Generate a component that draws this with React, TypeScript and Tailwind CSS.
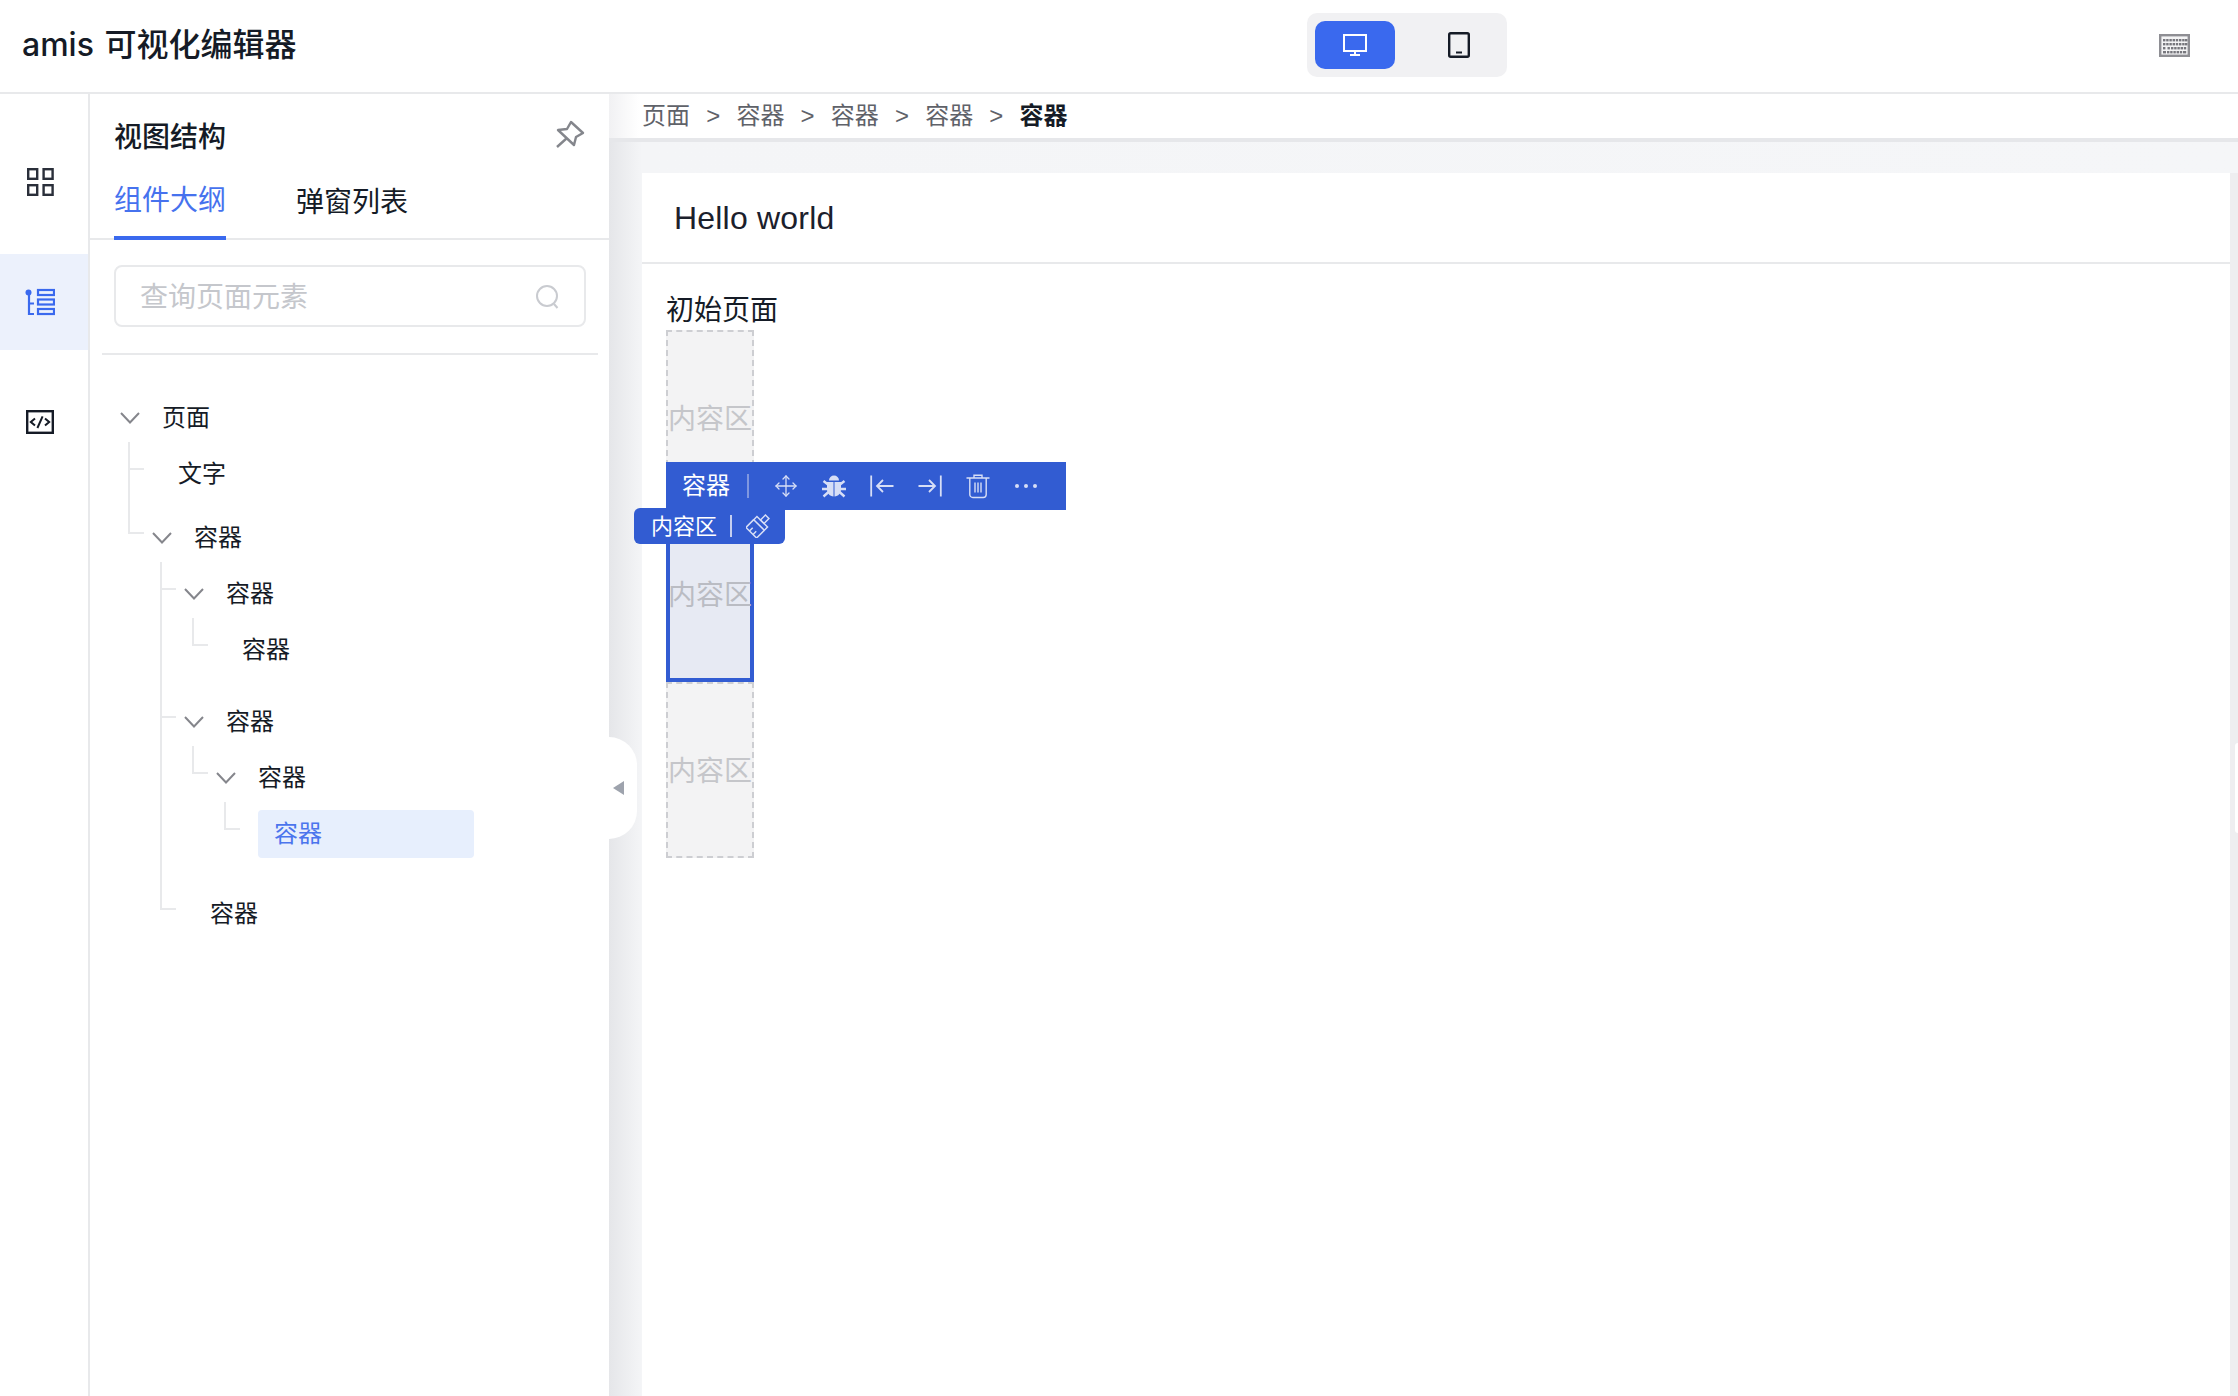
import React from "react";
import { Move } from "lucide-react";

type Node = { label: string; children?: Node[]; selected?: boolean };

const tree: Node = {
  label: "页面",
  children: [
    { label: "文字" },
    {
      label: "容器",
      children: [
        { label: "容器", children: [{ label: "容器" }] },
        { label: "容器", children: [{ label: "容器", children: [{ label: "容器", selected: true }] }] },
        { label: "容器" },
      ],
    },
  ],
};

function Chevron() {
  return (
    <svg width="20" height="12" viewBox="0 0 20 12" fill="none" stroke="#85868c" strokeWidth="2">
      <polyline points="1,1 10,10.5 19,1" />
    </svg>
  );
}

function TreeItem({ node, isChild, isLast }: { node: Node; isChild?: boolean; isLast?: boolean }) {
  return (
    <li className="relative py-2">
      {isChild && (
        <span className="absolute left-[-2px] top-0 h-[28px] w-[16px] border-b-2 border-l-2 border-[#e8e9eb]" />
      )}
      {isChild && !isLast && <span className="absolute bottom-0 left-[-2px] top-0 w-[2px] bg-[#e8e9eb]" />}
      {node.children ? (
        <div className="flex h-[48px] items-center text-[24px] text-[#151b26]">
          <span className="ml-[22px] flex w-[20px] items-center">
            <Chevron />
          </span>
          <span className="ml-[22px]">{node.label}</span>
        </div>
      ) : (
        <div
          className={
            node.selected
              ? "ml-[32px] flex h-[48px] w-[216px] items-center rounded-[4px] bg-[#e7effd] pl-[16px] text-[24px] text-[#4b75ed]"
              : "ml-[32px] flex h-[48px] items-center pl-[16px] text-[24px] text-[#151b26]"
          }
        >
          {node.label}
        </div>
      )}
      {node.children && (
        <ul className="pl-[32px]">
          {node.children.map((c, i) => (
            <TreeItem key={i} node={c} isChild isLast={i === node.children!.length - 1} />
          ))}
        </ul>
      )}
    </li>
  );
}

function GridIcon() {
  return (
    <svg width="27" height="28" viewBox="0 0 27 28" fill="none" stroke="#2a2f3a" strokeWidth="2.4">
      <rect x="1.2" y="1.2" width="9" height="9.6" />
      <rect x="16.6" y="1.2" width="9" height="9.6" />
      <rect x="1.2" y="17.2" width="9" height="9.6" />
      <rect x="16.6" y="17.2" width="9" height="9.6" />
    </svg>
  );
}

function TreeIcon() {
  return (
    <svg width="30" height="28" viewBox="0 0 30 28" fill="none" stroke="#3a69ee" strokeWidth="2.2">
      <circle cx="3.5" cy="4.5" r="3" fill="#3a69ee" stroke="none" />
      <path d="M4 5V26H9M4 15.500H9" />
      <rect x="13" y="2" width="16" height="5" />
      <rect x="13" y="11.500" width="16" height="5" />
      <rect x="13" y="21" width="16" height="5" />
    </svg>
  );
}

function CodeIcon() {
  return (
    <svg width="28" height="24" viewBox="0 0 28 24" fill="none" stroke="#151b26">
      <rect x="1.2" y="1.2" width="25.6" height="21.6" strokeWidth="2.4" />
      <path d="M9 8.4L4.8 12L9 15.6M19 8.4L23.2 12L19 15.6M16.6 6.4L11.4 18" strokeWidth="2" />
    </svg>
  );
}

function KeyboardIcon() {
  const rows: [number, number[]][] = [
    [5, [4, 7.2, 10.4, 13.6, 16.8, 20, 23.2, 26]],
    [9, [4, 7.2, 10.4, 13.6, 16.8, 20, 23.2, 26]],
    [13, [4, 8.5, 12, 15.2, 18.4, 21.6, 24.8]],
    [17, [8, 11.2, 14.4, 17.6, 20.8]],
  ];
  return (
    <svg width="31" height="23" viewBox="0 0 31 23">
      <rect x="1.2" y="1.2" width="28.6" height="20.6" fill="#f4f4f5" stroke="#8e8e93" strokeWidth="2.4" />
      {rows.map(([y, xs]) =>
        xs.map((x) => <rect key={`${y}-${x}`} x={x} y={y} width="2.4" height="2.4" fill="#77777d" />)
      )}
      <rect x="4" y="17" width="3" height="2.4" fill="#77777d" />
      <rect x="24" y="17" width="3.2" height="2.4" fill="#77777d" />
    </svg>
  );
}

const tone = "#d7def6";

function BugIcon() {
  return (
    <svg width="24" height="24" viewBox="0 0 24 24" fill={tone} stroke="none">
      <path d="M7 6.5a5 5 0 0 1 10 0z" />
      <path d="M5 8h6.500v14.500c-3.800-.4-6.500-3-6.500-7.500z" />
      <path d="M19 8h-6.500v14.500c3.800-.4 6.500-3 6.500-7.500z" />
      <path d="M1.500 7L6 10.500M0 15H6M1.500 22.500L6.500 18M22.500 7L18 10.500M24 15H18M22.500 22.500L17.500 18" stroke={tone} strokeWidth="2.400" fill="none" />
    </svg>
  );
}

function ArrowToLeft() {
  return (
    <svg width="24" height="22" viewBox="0 0 24 22" fill="none" stroke={tone} strokeWidth="1.800">
      <path d="M1.200 0.500V21.500" />
      <path d="M7 11H23.500M13 5L7 11L13 17" />
    </svg>
  );
}

function ArrowToRight() {
  return (
    <svg width="24" height="22" viewBox="0 0 24 22" fill="none" stroke={tone} strokeWidth="1.800">
      <path d="M22.800 0.500V21.500" />
      <path d="M17 11H0.500M11 5L17 11L11 17" />
    </svg>
  );
}

function TrashIcon() {
  return (
    <svg width="24" height="25" viewBox="0 0 24 25" fill="none" stroke={tone} strokeWidth="1.400">
      <path d="M0.500 4H23.500M8 4V1.200H16V4" />
      <path d="M3.800 4V20.500a3 3 0 0 0 3 3H17.200a3 3 0 0 0 3-3V4" />
      <path d="M9 8.500V18.500M12 8.500V18.500M15 8.500V18.500" />
    </svg>
  );
}

function BrushIcon() {
  return (
    <svg width="24" height="24" viewBox="0 0 24 24" fill="none" stroke={tone} strokeWidth="1.500">
      <g transform="rotate(45 12 12)">
        <rect x="9.500" y="-1" width="5" height="7" />
        <rect x="4.500" y="6" width="15" height="4.500" />
        <path d="M4.500 10.500V21.500H19.500V10.500M9.500 21.500V17M14.500 21.500V17" />
      </g>
    </svg>
  );
}

function PlaceholderBox({ active }: { active?: boolean }) {
  return (
    <div
      className={
        active
          ? "flex h-[176px] w-[88px] items-center justify-center whitespace-nowrap border-4 border-solid border-[#325cd2] bg-[#e7eaf3] pt-[2px] text-[28px] text-[#babcc3]"
          : "flex h-[176px] w-[88px] items-center justify-center whitespace-nowrap border-2 border-dashed border-[#cdced2] bg-[#f3f3f4] pt-[2px] text-[28px] text-[#c5c6ca]"
      }
    >
      内容区
    </div>
  );
}

export default function App() {
  return (
    <div className="flex h-[1396px] w-full flex-col overflow-hidden bg-white font-['Inter','Noto_Sans_CJK_SC',sans-serif] text-[#151b26]">
      <header className="flex h-[94px] shrink-0 items-center border-b-2 border-[#e8e9eb] pb-[2px]">
        <div className="w-[1307px] pl-[22px] text-[32px] font-medium">
          amis <span className="ml-[2px]">可视化编辑器</span>
        </div>
        <div className="flex h-[64px] w-[200px] items-center gap-6 rounded-[10px] bg-[#f1f1f3] px-2">
          <button className="flex h-[48px] w-[80px] items-center justify-center rounded-[10px] bg-[#3a69ee]">
            <svg width="24" height="22" viewBox="0 0 24 22" fill="none" stroke="#ffffff" strokeWidth="2">
              <rect x="1" y="1" width="22" height="16" />
              <path d="M12 17V20.500M7 21H17" />
            </svg>
          </button>
          <button className="flex h-[48px] w-[80px] items-center justify-center">
            <svg width="22" height="26" viewBox="0 0 22 26" fill="none" stroke="#151b26" strokeWidth="2.400">
              <rect x="1.200" y="1.200" width="19.600" height="23.600" rx="1.500" />
              <path d="M8 20.500H14" strokeWidth="2" />
            </svg>
          </button>
        </div>
        <div className="ml-auto mr-[48px] flex">
          <KeyboardIcon />
        </div>
      </header>

      <div className="flex min-h-0 flex-1">
        <nav className="flex w-[90px] shrink-0 flex-col gap-6 border-r-2 border-[#e8e9eb] pt-10">
          <div className="flex h-[96px] items-center justify-center pr-2">
            <GridIcon />
          </div>
          <div className="flex h-[96px] items-center justify-center bg-[#ecf1fc] pr-2">
            <TreeIcon />
          </div>
          <div className="flex h-[96px] items-center justify-center pr-2">
            <CodeIcon />
          </div>
        </nav>

        <aside className="relative z-10 flex w-[519px] shrink-0 flex-col bg-white">
          <div className="flex items-center justify-between pl-[24px] pr-[22px] pt-[23px]">
            <div className="text-[28px] font-medium leading-[40px]">视图结构</div>
            <svg className="-mt-[6px]" width="34" height="32" viewBox="14 12 34 32" fill="none" stroke="#84868c" strokeWidth="2.400" strokeLinejoin="round">
              <path d="M19 24L28 23L32 16L44 27L37 31L35 39Z" />
              <path d="M18 41L28 32" />
            </svg>
          </div>
          <div className="flex border-b-2 border-[#e8e9eb] pl-[24px]">
            <div className="-mb-[2px] border-b-4 border-[#3a69ee] pb-[16px] pt-[23px] text-[28px] leading-[40px] text-[#4672ee]">
              组件大纲
            </div>
            <div className="-mb-[2px] ml-[70px] pb-[18px] pt-[25px] text-[28px] leading-[40px]">弹窗列表</div>
          </div>
          <div className="ml-[24px] mt-[25px] flex h-[62px] w-[472px] items-center justify-between rounded-[8px] border-2 border-[#e8e9eb] pl-[24px] pr-[24px]">
            <span className="pt-[2px] text-[28px] text-[#c5c7cc]">查询页面元素</span>
            <svg className="mt-[2px]" width="24" height="24" viewBox="0 0 24 24" fill="none" stroke="#c9cbd0" strokeWidth="2">
              <circle cx="11" cy="11" r="10" />
              <path d="M18 19L21.500 23" />
            </svg>
          </div>
          <div className="ml-[12px] mt-[26px] h-[2px] w-[496px] bg-[#e8e9eb]" />
          <ul className="ml-2 mt-[31px]">
            <TreeItem node={tree} />
          </ul>
          <div className="absolute left-full top-[643px] flex h-[102px] w-[28px] items-center rounded-r-[28px] bg-white pl-[4px]">
            <svg width="11" height="14" viewBox="0 0 11 14" fill="#9ea3ad">
              <polygon points="0,7 11,0 11,14" />
            </svg>
          </div>
        </aside>

        <main className="flex min-w-0 flex-1 flex-col">
          <div className="flex h-[48px] shrink-0 items-center border-b-4 border-[#e6e7ea] bg-[linear-gradient(90deg,#f1f1f3,#ffffff_30px)] pl-[33px] text-[24px] text-[#5f6269]">
            {["页面", "容器", "容器", "容器"].map((t, i) => (
              <React.Fragment key={i}>
                <span>{t}</span>
                <span className="mx-[16.2px] font-['Liberation_Sans',sans-serif]">&gt;</span>
              </React.Fragment>
            ))}
            <span className="font-semibold text-[#151b26]">容器</span>
          </div>
          <div className="relative flex min-h-0 flex-1 bg-[linear-gradient(90deg,#e5e6e9,#f4f5f7_33px,#f5f6f8)] pl-[33px] pt-[31px]">
            <div className="flex min-w-0 flex-1 flex-col bg-white">
              <div className="flex h-[91px] shrink-0 items-center border-b-2 border-[#e8e9eb] pl-[32px] font-['Liberation_Sans',sans-serif] text-[32px] tracking-[0.2px] text-[#1b202c]">
                Hello world
              </div>
              <div className="pl-[24px] pt-[26px]">
                <div className="text-[28px] leading-[40px]">初始页面</div>
                <div className="relative w-[88px]">
                  <PlaceholderBox />
                  <PlaceholderBox active />
                  <PlaceholderBox />
                  <div className="absolute left-0 top-[132px] flex h-[48px] w-[400px] items-center bg-[#325cd2] pl-[16px]">
                    <span className="w-[48px] text-[24px] text-white">容器</span>
                    <span className="ml-[17px] h-[24px] w-[2px] bg-[#7f97e0]" />
                    <span className="ml-[25px] flex w-[24px] justify-center">
                      <Move size={24} color={tone} strokeWidth={1.300} />
                    </span>
                    <span className="ml-[24px] flex w-[24px] justify-center">
                      <BugIcon />
                    </span>
                    <span className="ml-[24px] flex w-[24px] justify-center">
                      <ArrowToLeft />
                    </span>
                    <span className="ml-[24px] flex w-[24px] justify-center">
                      <ArrowToRight />
                    </span>
                    <span className="ml-[24px] flex w-[24px] justify-center">
                      <TrashIcon />
                    </span>
                    <span className="ml-[24px] flex w-[24px] items-center justify-center gap-[5px]">
                      <span className="size-[4px] shrink-0 rounded-full bg-[#d7def6]" />
                      <span className="size-[4px] shrink-0 rounded-full bg-[#d7def6]" />
                      <span className="size-[4px] shrink-0 rounded-full bg-[#d7def6]" />
                    </span>
                  </div>
                  <div className="absolute left-[-32px] top-[178px] flex h-[36px] w-[151px] items-center rounded-b-[6px] rounded-tl-[6px] bg-[#325cd2] pl-[17px]">
                    <span className="whitespace-nowrap text-[22px] text-white">内容区</span>
                    <span className="ml-[13px] h-[22px] w-[2px] bg-[#c4cef0]" />
                    <span className="ml-[14px] flex">
                      <BrushIcon />
                    </span>
                  </div>
                </div>
              </div>
            </div>
            <div className="w-[8px] shrink-0 bg-[#eeeef0]" />
            <div className="absolute right-0 top-[601px] h-[90px] w-[3px] rounded-l-[3px] bg-white" />
          </div>
        </main>
      </div>
    </div>
  );
}
